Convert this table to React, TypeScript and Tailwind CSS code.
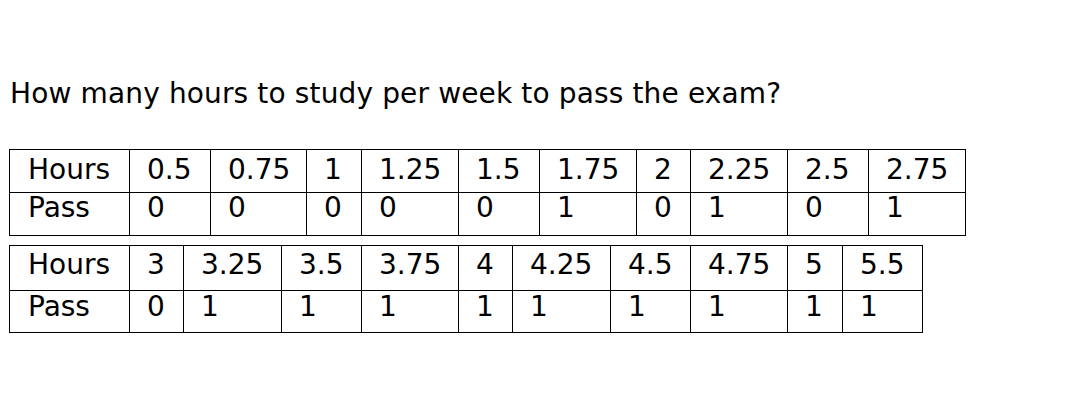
type Col = { h: string; p: string; w: number };

const table1: Col[] = [
  { h: "Hours", p: "Pass", w: 120 },
  { h: "0.5", p: "0", w: 81 },
  { h: "0.75", p: "0", w: 96 },
  { h: "1", p: "0", w: 55 },
  { h: "1.25", p: "0", w: 97 },
  { h: "1.5", p: "0", w: 81 },
  { h: "1.75", p: "1", w: 97 },
  { h: "2", p: "0", w: 54 },
  { h: "2.25", p: "1", w: 97 },
  { h: "2.5", p: "0", w: 81 },
  { h: "2.75", p: "1", w: 97 },
];

const table2: Col[] = [
  { h: "Hours", p: "Pass", w: 120 },
  { h: "3", p: "0", w: 54 },
  { h: "3.25", p: "1", w: 98 },
  { h: "3.5", p: "1", w: 80 },
  { h: "3.75", p: "1", w: 97 },
  { h: "4", p: "1", w: 54 },
  { h: "4.25", p: "1", w: 98 },
  { h: "4.5", p: "1", w: 80 },
  { h: "4.75", p: "1", w: 97 },
  { h: "5", p: "1", w: 55 },
  { h: "5.5", p: "1", w: 80 },
];

function Table({ cols, second }: { cols: Col[]; second?: boolean }) {
  return (
    <div className="flex w-fit border-l border-t border-black">
      {cols.map((c, i) => (
        <div
          key={i}
          className="flex flex-col border-r border-black shrink-0"
          style={{ width: c.w }}
        >
          <div
            className={
              second
                ? "h-[45px] pt-[5px] border-b border-black whitespace-nowrap"
                : "h-[43px] pt-[6px] border-b border-black whitespace-nowrap"
            }
          >
            <span className={i === 0 ? "pl-[18px]" : "pl-[17px]"}>{c.h}</span>
          </div>
          <div
            className={
              second
                ? "h-[42px] pt-[2px] border-b border-black whitespace-nowrap"
                : "h-[43px] pt-[1px] border-b border-black whitespace-nowrap"
            }
          >
            <span className={i === 0 ? "pl-[18px]" : "pl-[17px]"}>{c.p}</span>
          </div>
        </div>
      ))}
    </div>
  );
}

export default function App() {
  return (
    <div className="bg-white w-[1072px] h-[405px] overflow-hidden pt-[80px] font-['DejaVu_Sans',sans-serif] text-[28px] leading-[28px] text-black">
      <div className="pl-[10px] tracking-[0.14px] whitespace-nowrap">
        How many hours to study per week to pass the exam?
      </div>
      <div className="ml-[9px] mt-[41px]">
        <Table cols={table1} />
      </div>
      <div className="ml-[9px] mt-[9px]">
        <Table cols={table2} second />
      </div>
    </div>
  );
}
